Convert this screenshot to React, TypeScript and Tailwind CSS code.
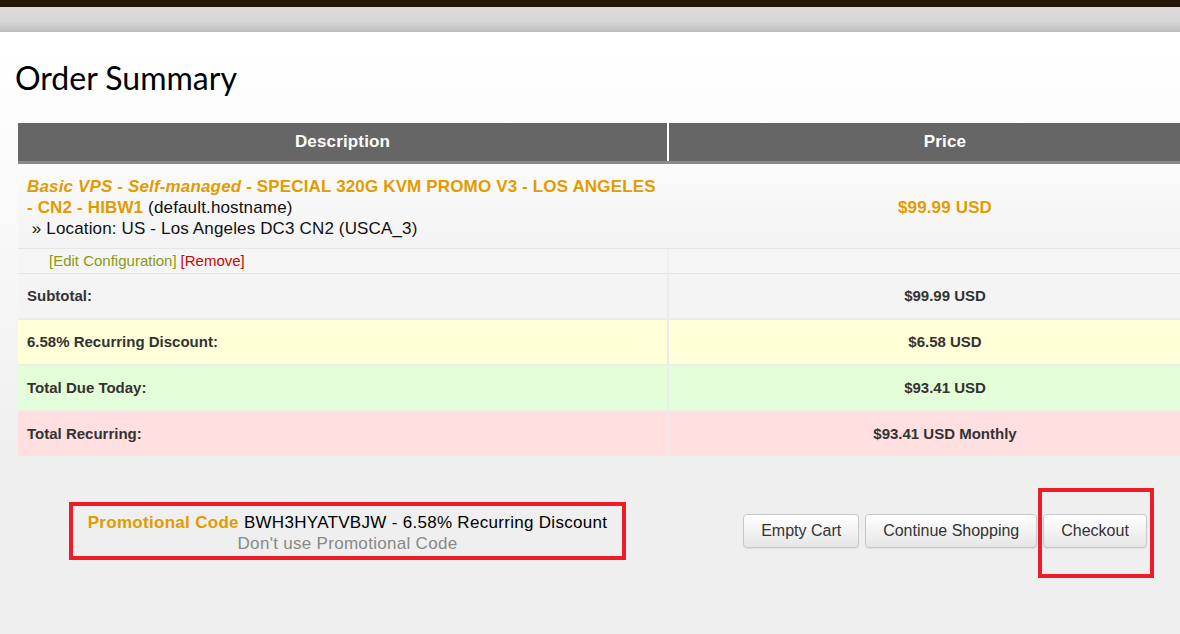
export default function App() {
  const orange = "text-[#e39b00]";
  const btn =
    "h-[34px] px-[17px] border border-[#c8c8c8] rounded-[4px] bg-[linear-gradient(to_bottom,#ffffff,#e6e6e6)] shadow-[0_1px_1px_rgba(0,0,0,0.08)] text-[16px] text-[#333] whitespace-nowrap";
  return (
    <div className="w-[1180px] h-[634px] overflow-hidden relative font-['Liberation_Sans',Arial,sans-serif] bg-[linear-gradient(to_bottom,#ffffff_40px,#fafafa_200px,#efefef_460px)]">
      <div className="h-[7px] bg-[#261608]" />
      <div className="h-[25px] bg-[linear-gradient(to_bottom,#dbdbdb_0%,#d7d7d7_60%,#bcbcbc_100%)]" />
      <h1 className="pl-[15px] pt-[26px] font-['Lato',sans-serif] text-[32px] leading-[40px] text-black font-normal">
        Order Summary
      </h1>

      <div className="ml-[18px] mt-[25px] w-[1203px] tracking-[0.15px]">
        {/* Header */}
        <div className="flex h-[41px] bg-[#666666] border-b-[3px] border-[#8a8a8a] text-white font-bold text-[17px]">
          <div className="w-[649px] shrink-0 flex items-center justify-center">Description</div>
          <div className="w-[2px] shrink-0 bg-white" />
          <div className="w-[552px] shrink-0 flex items-center justify-center">Price</div>
        </div>

        {/* Product */}
        <div className="flex h-[84px] bg-[linear-gradient(to_bottom,#fbfbfb,#f3f3f3)] text-[17px] leading-[21px]">
          <div className="w-[649px] shrink-0 pl-[9px] pr-[2px] pt-[12px] text-[#111]">
            <span className={`${orange} font-bold`}>
              <i>Basic VPS - Self-managed</i> - SPECIAL 320G KVM PROMO V3 - LOS ANGELES - CN2 - HIBW1
            </span>{" "}
            (default.hostname)
            <br />
            &nbsp;» Location: US - Los Angeles DC3 CN2 (USCA_3)
          </div>
          <div className="w-[2px] shrink-0" />
          <div className={`w-[552px] shrink-0 flex items-center justify-center pt-[2px] font-bold ${orange}`}>$99.99 USD</div>
        </div>

        {/* Edit row */}
        <div className="flex h-[26px] border-t border-b border-[#e6e6e6] bg-[#f5f5f5] text-[15px] tracking-normal">
          <div className="w-[649px] shrink-0 pl-[31px] pt-[1px] flex items-center">
            <span className="text-[#8a9a12]">[Edit Configuration]</span>
            <span className="ml-[4px] text-[#d40000]">[Remove]</span>
          </div>
          <div className="w-[2px] shrink-0 bg-[#efefef]" />
          <div className="w-[552px] shrink-0" />
        </div>

        {/* Summary rows */}
        <div className="flex flex-col gap-[2px] bg-[#ececec] text-[15px] font-bold text-[#333] tracking-normal">
          {[
            ["Subtotal:", "$99.99 USD", "bg-[#f4f4f4]"],
            ["6.58% Recurring Discount:", "$6.58 USD", "bg-[#ffffd8]"],
            ["Total Due Today:", "$93.41 USD", "bg-[#e4fed9]"],
            ["Total Recurring:", "$93.41 USD Monthly", "bg-[#ffdfdf]"],
          ].map(([label, value, bg]) => (
            <div key={label} className="flex h-[44px] gap-[2px]">
              <div className={`w-[649px] shrink-0 pl-[9px] pt-[1px] flex items-center ${bg}`}>{label}</div>
              <div className={`w-[552px] shrink-0 pt-[1px] flex items-center justify-center ${bg}`}>{value}</div>
            </div>
          ))}
        </div>
      </div>

      {/* Bottom section */}
      <div className="flex items-center mt-[46px]">
        <div className="w-[649px] shrink-0 ml-[18px] pl-[10px] flex justify-center">
          <div className="border-4 border-[#ee1c24] px-[15px] pt-[6px] pb-[2px] text-center text-[17px] leading-[21px] tracking-[0.3px] whitespace-nowrap">
            <div className="text-black">
              <span className={`${orange} font-bold`}>Promotional Code</span> BWH3HYATVBJW - 6.58% Recurring Discount
            </div>
            <div className="text-[#888888]">Don't use Promotional Code</div>
          </div>
        </div>
        <div className="w-[552px] shrink-0 ml-[2px] flex justify-center gap-[6px]">
          <button className={btn}>Empty Cart</button>
          <button className={btn}>Continue Shopping</button>
          <div className="relative">
            <button className={btn}>Checkout</button>
            <div className="absolute left-[-5px] right-[-7px] top-[-26px] bottom-[-30px] border-4 border-[#ee1c24] pointer-events-none" />
          </div>
        </div>
      </div>
    </div>
  );
}
